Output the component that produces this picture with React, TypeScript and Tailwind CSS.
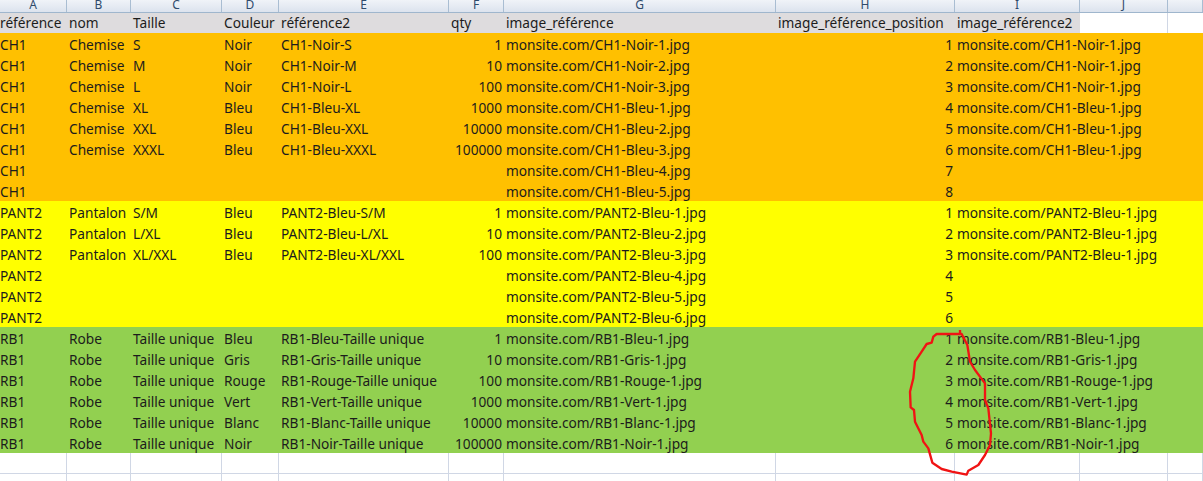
const COLS = "grid-cols-[67px_64px_91px_57px_170px_55px_272px_179px_125px_88px_35px]";

type Row = [string, string, string, string, string, string, string, string, string];

const orange: Row[] = [
  ["CH1", "Chemise", "S", "Noir", "CH1-Noir-S", "1", "monsite.com/CH1-Noir-1.jpg", "1", "monsite.com/CH1-Noir-1.jpg"],
  ["CH1", "Chemise", "M", "Noir", "CH1-Noir-M", "10", "monsite.com/CH1-Noir-2.jpg", "2", "monsite.com/CH1-Noir-1.jpg"],
  ["CH1", "Chemise", "L", "Noir", "CH1-Noir-L", "100", "monsite.com/CH1-Noir-3.jpg", "3", "monsite.com/CH1-Noir-1.jpg"],
  ["CH1", "Chemise", "XL", "Bleu", "CH1-Bleu-XL", "1000", "monsite.com/CH1-Bleu-1.jpg", "4", "monsite.com/CH1-Bleu-1.jpg"],
  ["CH1", "Chemise", "XXL", "Bleu", "CH1-Bleu-XXL", "10000", "monsite.com/CH1-Bleu-2.jpg", "5", "monsite.com/CH1-Bleu-1.jpg"],
  ["CH1", "Chemise", "XXXL", "Bleu", "CH1-Bleu-XXXL", "100000", "monsite.com/CH1-Bleu-3.jpg", "6", "monsite.com/CH1-Bleu-1.jpg"],
  ["CH1", "", "", "", "", "", "monsite.com/CH1-Bleu-4.jpg", "7", ""],
  ["CH1", "", "", "", "", "", "monsite.com/CH1-Bleu-5.jpg", "8", ""],
];

const yellow: Row[] = [
  ["PANT2", "Pantalon", "S/M", "Bleu", "PANT2-Bleu-S/M", "1", "monsite.com/PANT2-Bleu-1.jpg", "1", "monsite.com/PANT2-Bleu-1.jpg"],
  ["PANT2", "Pantalon", "L/XL", "Bleu", "PANT2-Bleu-L/XL", "10", "monsite.com/PANT2-Bleu-2.jpg", "2", "monsite.com/PANT2-Bleu-1.jpg"],
  ["PANT2", "Pantalon", "XL/XXL", "Bleu", "PANT2-Bleu-XL/XXL", "100", "monsite.com/PANT2-Bleu-3.jpg", "3", "monsite.com/PANT2-Bleu-1.jpg"],
  ["PANT2", "", "", "", "", "", "monsite.com/PANT2-Bleu-4.jpg", "4", ""],
  ["PANT2", "", "", "", "", "", "monsite.com/PANT2-Bleu-5.jpg", "5", ""],
  ["PANT2", "", "", "", "", "", "monsite.com/PANT2-Bleu-6.jpg", "6", ""],
];

const green: Row[] = [
  ["RB1", "Robe", "Taille unique", "Bleu", "RB1-Bleu-Taille unique", "1", "monsite.com/RB1-Bleu-1.jpg", "1", "monsite.com/RB1-Bleu-1.jpg"],
  ["RB1", "Robe", "Taille unique", "Gris", "RB1-Gris-Taille unique", "10", "monsite.com/RB1-Gris-1.jpg", "2", "monsite.com/RB1-Gris-1.jpg"],
  ["RB1", "Robe", "Taille unique", "Rouge", "RB1-Rouge-Taille unique", "100", "monsite.com/RB1-Rouge-1.jpg", "3", "monsite.com/RB1-Rouge-1.jpg"],
  ["RB1", "Robe", "Taille unique", "Vert", "RB1-Vert-Taille unique", "1000", "monsite.com/RB1-Vert-1.jpg", "4", "monsite.com/RB1-Vert-1.jpg"],
  ["RB1", "Robe", "Taille unique", "Blanc", "RB1-Blanc-Taille unique", "10000", "monsite.com/RB1-Blanc-1.jpg", "5", "monsite.com/RB1-Blanc-1.jpg"],
  ["RB1", "Robe", "Taille unique", "Noir", "RB1-Noir-Taille unique", "100000", "monsite.com/RB1-Noir-1.jpg", "6", "monsite.com/RB1-Noir-1.jpg"],
];

const letters = ["A", "B", "C", "D", "E", "F", "G", "H", "I", "J", ""];
const headers = ["référence", "nom", "Taille", "Couleur", "référence2", "qty", "image_référence", "image_référence_position", "image_référence2"];

function DataRow({ row, color }: { row: Row; color: string }) {
  return (
    <div className={`grid h-[21px] ${COLS} ${color}`}>
      {row.map((cell, i) => (
        <div
          key={i}
          className={
            i === 5 || i === 7
              ? "whitespace-nowrap pr-[2px] pt-[5px] text-right"
              : i === 0
                ? "whitespace-nowrap pl-0 pt-[5px]"
                : "whitespace-nowrap pl-[2px] pt-[5px]"
          }
        >
          {cell}
        </div>
      ))}
    </div>
  );
}

function EmptyRow() {
  return (
    <div className={`grid h-[21px] border-b border-[#d0d7e5] ${COLS}`}>
      {letters.map((_, i) => (
        <div key={i} className="border-r border-[#d0d7e5]" />
      ))}
    </div>
  );
}

export default function App() {
  return (
    <div className="relative h-[481px] w-[1203px] overflow-hidden bg-white font-['Noto_Sans',sans-serif] text-[13.7px] leading-none text-[#1c1c1c]">
      {/* Column letters */}
      <div className={`grid h-[13px] overflow-hidden border-b border-[#9fb6cd] bg-gradient-to-b from-[#f0f3f8] to-[#dce3ee] ${COLS}`}>
        {letters.map((l, i) => (
          <div
            key={i}
            className="flex h-[12px] items-start justify-center border-r border-[#a9bdd2] text-[12px] leading-[9px] text-[#2f4a6b]"
          >
            {l}
          </div>
        ))}
      </div>

      {/* Header row */}
      <div className={`grid h-[20px] items-center ${COLS}`}>
        {headers.map((h, i) => (
          <div
            key={i}
            className={`flex h-full items-center whitespace-nowrap bg-[#dedcde] ${i === 0 ? "pl-0" : "pl-[2px]"}`}
          >
            {h}
          </div>
        ))}
        <div className="h-full border-r border-[#d0d7e5]" />
        <div />
      </div>

      {orange.map((row, i) => (
        <DataRow key={i} row={row} color="bg-[#ffc000]" />
      ))}
      {yellow.map((row, i) => (
        <DataRow key={i} row={row} color="bg-[#ffff00]" />
      ))}
      {green.map((row, i) => (
        <DataRow key={i} row={row} color="bg-[#92d050]" />
      ))}
      <EmptyRow />
      <EmptyRow />

      {/* Red hand-drawn circle */}
      <svg
        className="absolute left-[880px] top-[320px] h-[161px] w-[160px]"
        viewBox="0 0 480 483"
        fill="none"
      >
        <path
          d="M240 30 L240 42 L170 42 L160 50 L155 68 L140 72 L125 95 L105 125 L100 175 L90 215 L92 262 L102 270 L105 305 L125 345 L130 365 L145 385 L157 428 L185 447 L215 455 L260 464 L265 452 L295 435 L315 405 L330 375 L333 340 L325 265 L315 240 L315 190 L285 150 L270 125 L262 75 L245 42 L232 42"
          stroke="#f01414"
          strokeWidth="7"
          strokeLinejoin="round"
        />
      </svg>
    </div>
  );
}
